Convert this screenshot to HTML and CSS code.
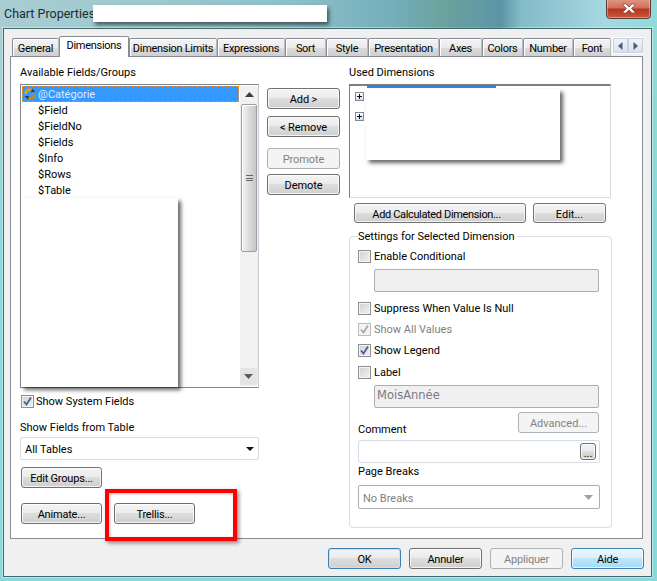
FILE: index.html
```html
<!DOCTYPE html>
<html lang="en">
<head>
<meta charset="utf-8">
<title>Chart Properties</title>
<link rel="stylesheet" href="styles.css">
</head>
<body>
<div class="window">
  <div class="blur-patch"></div>
  <header class="titlebar">
    <span class="title">Chart Properties</span>
    <span class="title-mask"></span>
    <button class="close" aria-label="Close">
      <svg width="16" height="11" viewBox="0 0 16 11"><path d="M2 1h3l3 3 3-3h3v1l-3.500 3.500L14 9v1h-3L8 7l-3 3H2V9l3.500-3.500L2 2z" fill="#fff" stroke="#7d3a30" stroke-width=".7"/></svg>
    </button>
  </header>
  <main class="client">
    <nav class="tabstrip">
      <span class="tab t-general">General</span>
      <span class="tab active t-dimensions">Dimensions</span>
      <span class="tab t-limits">Dimension Limits</span>
      <span class="tab t-expressions">Expressions</span>
      <span class="tab t-sort">Sort</span>
      <span class="tab t-style">Style</span>
      <span class="tab t-presentation">Presentation</span>
      <span class="tab t-axes">Axes</span>
      <span class="tab t-colors">Colors</span>
      <span class="tab t-number">Number</span>
      <span class="tab t-font">Font</span>
      <span class="tab-scroll">
        <span class="tab-arrow"><svg width="5" height="8" viewBox="0 0 5 8"><path d="M4.500 0v8L0 4z" fill="#4a5a78"/></svg></span>
        <span class="tab-arrow"><svg width="5" height="8" viewBox="0 0 5 8"><path d="M.5 0v8L5 4z" fill="#4a5a78"/></svg></span>
      </span>
    </nav>
    <section class="page">
      <div class="col-left">
        <div class="label">Available Fields/Groups</div>
        <div class="listbox">
          <div class="list-rows">
            <div class="row selected">
              <svg class="group-icon" width="14" height="14" viewBox="0 0 14 14"><path d="M2.500 7a4.500 4.500 0 0 1 8-2.800" fill="none" stroke="#e8a010" stroke-width="2.400"/><path d="M11.500 7a4.500 4.500 0 0 1-8 2.800" fill="none" stroke="#c98a08" stroke-width="2.400"/><path d="M9 1.500l3.500 3.500H8z" fill="#3a3a30"/><path d="M5 12.500L1.500 9H6z" fill="#3a3a30"/></svg>
              <span class="row-text">@Catégorie</span>
            </div>
            <div class="row">$Field</div>
            <div class="row">$FieldNo</div>
            <div class="row">$Fields</div>
            <div class="row">$Info</div>
            <div class="row">$Rows</div>
            <div class="row">$Table</div>
          </div>
          <div class="scrollbar">
            <span class="sb-btn"><svg width="9" height="5" viewBox="0 0 9 5"><path d="M4.500 0L9 5H0z" fill="#3c3c3c"/></svg></span>
            <span class="sb-thumb"><span class="grip"></span></span>
            <span class="sb-btn sb-down"><svg width="9" height="5" viewBox="0 0 9 5"><path d="M4.500 5L9 0H0z" fill="#5a5a5a"/></svg></span>
          </div>
          <div class="mask mask-list"></div>
        </div>
        <label class="check check-system">
          <span class="box"><svg width="11" height="11" viewBox="0 0 11 11"><path d="M2 5.500l2.500 3L9 1.500" fill="none" stroke="#4a5f97" stroke-width="1.800"/></svg></span>
          Show System Fields
        </label>
        <div class="label label-table">Show Fields from Table</div>
        <div class="combo combo-tables">
          <span class="combo-text">All Tables</span>
          <svg width="8" height="4" viewBox="0 0 8 4"><path d="M0 0h8L4 4z" fill="#111"/></svg>
        </div>
        <button class="btn btn-side btn-groups">Edit Groups...</button>
        <div class="btn-row">
          <button class="btn btn-side">Animate...</button>
          <button class="btn btn-side">Trellis...</button>
        </div>
      </div>

      <div class="col-mid">
        <button class="btn btn-mid">Add &gt;</button>
        <button class="btn btn-mid">&lt; Remove</button>
        <button class="btn btn-mid disabled gap-promote" disabled>Promote</button>
        <button class="btn btn-mid gap-demote">Demote</button>
      </div>

      <div class="col-right">
        <div class="label">Used Dimensions</div>
        <div class="treebox">
          <div class="tree-row"><span class="plus"></span></div>
          <div class="tree-row"><span class="plus"></span></div>
          <div class="tree-bar"></div>
          <div class="mask mask-tree"></div>
        </div>
        <div class="calc-row">
          <button class="btn btn-calc">Add Calculated Dimension...</button>
          <button class="btn btn-edit">Edit...</button>
        </div>
        <div class="group">
          <div class="legend">Settings for Selected Dimension</div>
          <label class="check c-conditional"><span class="box"></span>Enable Conditional</label>
          <div class="field field-empty"></div>
          <label class="check c-suppress"><span class="box"></span>Suppress When Value Is Null</label>
          <label class="check c-all muted"><span class="box box-off"><svg width="11" height="11" viewBox="0 0 11 11"><path d="M2 5.500l2.500 3L9 1.500" fill="none" stroke="#a8a8a8" stroke-width="1.800"/></svg></span>Show All Values</label>
          <label class="check c-legend"><span class="box"><svg width="11" height="11" viewBox="0 0 11 11"><path d="M2 5.500l2.500 3L9 1.500" fill="none" stroke="#4a5f97" stroke-width="1.800"/></svg></span>Show Legend</label>
          <label class="check c-label"><span class="box"></span>Label</label>
          <div class="field field-mois">MoisAnnée</div>
          <div class="comment-row">
            <span class="comment-label">Comment</span>
            <button class="btn btn-advanced disabled" disabled>Advanced...</button>
          </div>
          <div class="comment-input"><button class="btn btn-dots">...</button></div>
          <div class="label label-breaks">Page Breaks</div>
          <div class="combo combo-breaks">
            <span class="combo-text">No Breaks</span>
            <svg width="9" height="5" viewBox="0 0 9 5"><path d="M0 0h9L4.500 5z" fill="#a0a0a0"/></svg>
          </div>
        </div>
      </div>
      <div class="highlight"></div>
    </section>
    <footer class="footer">
      <button class="btn btn-foot btn-default">OK</button>
      <button class="btn btn-foot">Annuler</button>
      <button class="btn btn-foot disabled" disabled>Appliquer</button>
      <button class="btn btn-foot btn-hover">Aide</button>
    </footer>
  </main>
</div>
</body>
</html>
```

FILE: styles.css
```css
* { box-sizing: border-box; }
html, body { margin: 0; padding: 0; }
body {
  width: 657px;
  height: 581px;
  overflow: hidden;
  font-family: Roboto, "Liberation Sans", Arial, sans-serif;
  font-size: 11px;
  color: #000;
}
button { font: inherit; color: inherit; margin: 0; padding: 0; }

.window {
  position: relative;
  width: 657px;
  height: 581px;
  padding: 0 5px 4px 3px;
  background:
    linear-gradient(180deg, rgba(134,218,218,0) 30px, #86dada 260px),
    linear-gradient(90deg, #a9cdd3 0%, #9cc8cf 25%, #8cc0c8 45%, #74aebb 60%, #7fb8c4 78%, #a6d8e2 92%, #8fdada 100%);
  overflow: hidden;
}
.blur-patch {
  position: absolute;
  left: 390px;
  top: 0;
  width: 130px;
  height: 28px;
  background: linear-gradient(90deg, rgba(90,150,150,0), rgba(95,150,130,.55) 40%, rgba(70,125,150,.6) 85%, rgba(70,125,150,0));
}
.titlebar {
  position: relative;
  height: 28px;
  display: flex;
  align-items: flex-start;
  padding-left: 1px;
}
.title {
  margin-top: 7px;
  font-size: 12.500px;
  line-height: 14px;
  color: #1c2a2c;
  width: 89px;
  white-space: nowrap;
}
.title-mask {
  margin-top: 5px;
  width: 234px;
  height: 17px;
  background: #fff;
  box-shadow: 2px 3px 4px rgba(0,0,0,.55);
}
.close {
  position: absolute;
  left: 603px;
  top: -2px;
  width: 45px;
  height: 21px;
  border: 1px solid #5c3a38;
  border-radius: 0 0 4px 4px;
  background: linear-gradient(#e09a86 0%, #d0705a 45%, #b83520 55%, #c85a3a 100%);
  box-shadow: inset 0 0 0 1px rgba(255,255,255,.35);
  display: flex;
  align-items: center;
  justify-content: center;
}

.client {
  width: 649px;
  height: 549px;
  border: 1px solid #40686c;
  background: #f0f0f0;
  padding: 7px 0 0 6px;
  box-shadow: 0 0 0 1px rgba(255,255,255,.4);
}

.tabstrip {
  position: relative;
  z-index: 1;
  display: flex;
  align-items: flex-end;
  height: 20px;
  padding-left: 2px;
}
.tab {
  height: 18px;
  border: 1px solid #898c95;
  border-bottom: 0;
  border-right-color: #b8bac0;
  border-radius: 2px 2px 0 0;
  background: linear-gradient(#f4f4f4 0%, #ebebeb 50%, #dcdcdc 51%, #cfcfcf 100%);
  box-shadow: inset 1px 1px 0 #fff;
  line-height: 19px;
  letter-spacing: -.3px;
  text-align: center;
  white-space: nowrap;
}
.tab.active {
  height: 21px;
  margin-bottom: -1px;
  background: #fff;
  border-right-color: #898c95;
  line-height: 17px;
  padding-bottom: 3px;
}
.t-general { width: 47px; }
.t-dimensions { width: 70px; }
.t-limits { width: 88px; }
.t-expressions { width: 68px; }
.t-sort { width: 41px; }
.t-style { width: 42px; }
.t-presentation { width: 71px; }
.t-axes { width: 43px; }
.t-colors { width: 41px; }
.t-number { width: 50px; }
.t-font { width: 38px; }
.tab-scroll {
  display: flex;
  align-self: flex-start;
  margin: 1px 0 0 1px;
  padding: 1px 0 1px 1px;
  background: #fff;
  height: 17px;
}
.tab-arrow {
  width: 15px;
  height: 15px;
  border: 1px solid #c4d4e4;
  background: linear-gradient(#f2f4f8, #dbe1ea);
  display: flex;
  align-items: center;
  justify-content: center;
}

.page {
  position: relative;
  width: 633px;
  height: 483px;
  border: 1px solid #898c95;
  background: #fff;
  padding: 8px 0 0 9px;
  display: grid;
  grid-template-columns: 239px 73px 263px;
  column-gap: 8px;
  align-items: start;
}
.label { height: 14px; line-height: 16px; white-space: nowrap; }

.col-right { margin-left: 1px; }

.listbox {
  position: relative;
  margin-top: 5px;
  height: 304px;
  border: 1px solid #82878f;
  border-right-color: #c8ccd0;
  border-bottom-color: #82878f;
  display: flex;
  padding: 1px 0 1px 1px;
}
.list-rows { width: 219px; }
.row {
  height: 16px;
  line-height: 18px;
  padding-left: 16px;
  white-space: nowrap;
}
.row.selected {
  display: flex;
  align-items: flex-start;
  padding-left: 1px;
  gap: 1px;
  background: #3399ff;
  color: #dcecff;
  outline: 1px dashed #e88a20;
  outline-offset: -1px;
}
.group-icon { flex: none; margin-top: 1px; }
.row-text { height: 16px; }
.scrollbar {
  width: 18px;
  margin-left: 1px;
  display: flex;
  flex-direction: column;
  background: #f1f1f1;
}
.sb-btn {
  height: 17px;
  display: flex;
  align-items: center;
  justify-content: center;
}
.sb-thumb {
  height: 148px;
  margin: 1px 1px 0;
  border: 1px solid #9aa0a6;
  border-radius: 2px;
  background: linear-gradient(90deg, #f4f4f4, #dcdcdc 50%, #c6c6c6);
  box-shadow: inset 1px 1px 0 #fff;
  display: flex;
  align-items: center;
  justify-content: center;
}
.grip {
  width: 7px;
  height: 6px;
  border-top: 1px solid #666;
  border-bottom: 1px solid #666;
  background: linear-gradient(transparent 2px, #666 2px, #666 3px, transparent 3px);
}
.sb-down { margin-top: auto; background: #e4e4e4; margin-bottom: 1px; margin-right: 1px; }

.mask { position: absolute; background: #fff; box-shadow: 3px 3px 4px rgba(0,0,0,.6); }
.mask-list { left: 0; top: 113px; width: 157px; height: 189px; }
.mask-tree { left: 16px; top: 3px; width: 194px; height: 71px; }

.check {
  display: flex;
  align-items: flex-start;
  gap: 3px;
  height: 14px;
  line-height: 16px;
  white-space: nowrap;
}
.box {
  flex: none;
  width: 13px;
  height: 13px;
  margin-top: 1px;
  border: 1px solid #8e8f8f;
  background: linear-gradient(135deg, #cfd1d4, #f0f1f2);
  box-shadow: inset 0 0 0 1px #f4f4f4;
  display: flex;
  align-items: center;
  justify-content: center;
}
.box-off { background: #f4f4f4; border-color: #bcbcbc; }
.muted { color: #7f7f7f; }
.check-system { margin: 6px 0 0 1px; gap: 2px; }
.label-table { margin-top: 12px; }
.combo {
  display: flex;
  align-items: center;
  justify-content: space-between;
  margin-top: 3px;
  height: 23px;
  padding: 0 4px 0 4px;
  border: 1px solid #d6dde4;
  border-radius: 2px;
  background: #fff;
  white-space: nowrap;
}
.combo-text { padding-top: 2px; }
.btn {
  display: block;
  height: 21px;
  padding-top: 2px;
  border: 1px solid #707070;
  border-radius: 3px;
  background: linear-gradient(#f4f4f4 0%, #ebebeb 48%, #dddddd 50%, #cfcfcf 100%);
  box-shadow: inset 0 0 0 1px rgba(255,255,255,.75);
  text-align: center;
  white-space: nowrap;
}
.btn.disabled {
  border-color: #adb2b5;
  background: #f4f4f4;
  color: #838383;
  box-shadow: none;
}
.btn-side { width: 81px; letter-spacing: -.2px; }
.btn-groups { margin: 7px 0 0 1px; }
.btn-row { display: flex; gap: 12px; margin: 15px 0 0 1px; }

.col-mid { padding-top: 23px; display: flex; flex-direction: column; }
.btn-mid { width: 73px; letter-spacing: -.1px; margin-bottom: 7px; }
.gap-promote { margin-top: 4px; margin-bottom: 5px; }

.treebox {
  position: relative;
  margin-top: 5px;
  width: 262px;
  height: 114px;
  border: 1px solid #d8dce0;
  border-top: 2px solid #7e7e7e;
  border-left: 1px solid #7e7e7e;
  padding: 6px 0 0 5px;
}
.tree-row { height: 20px; }
.plus {
  display: block;
  width: 9px;
  height: 9px;
  border: 1px solid #7a8a9a;
  background:
    linear-gradient(#111, #111) center / 5px 1px no-repeat,
    linear-gradient(#111, #111) center / 1px 5px no-repeat,
    linear-gradient(#fff, #d8dee6);
}
.tree-bar {
  position: absolute;
  left: 17px;
  top: -1px;
  width: 129px;
  height: 3px;
  background: #3a7fdc;
}
.calc-row { display: flex; gap: 7px; margin: 5px 0 0 5px; }
.btn-calc { width: 172px; height: 20px; padding-right: 7px; letter-spacing: -.35px; }
.btn-edit { width: 73px; height: 20px; }

.group {
  margin-top: 13px;
  width: 263px;
  height: 292px;
  border: 1px solid #d5dfe5;
  border-radius: 4px;
  padding: 0 0 0 8px;
}
.legend {
  width: fit-content;
  margin-top: -8px;
  padding: 0 2px 0 0;
  height: 14px;
  line-height: 16px;
  background: #fff;
}
.c-conditional { margin-top: 6px; }
.field {
  margin: 6px 0 0 16px;
  width: 225px;
  height: 23px;
  border: 1px solid #abadb3;
  border-radius: 2px;
  background: #f0f0f0;
}
.field-mois {
  padding-left: 2px;
  line-height: 19px;
  font-family: "DejaVu Sans", sans-serif;
  font-size: 11.500px;
  color: #7a7a86;
}
.c-suppress { margin-top: 9px; }
.c-all { margin-top: 7px; }
.c-legend { margin-top: 7px; }
.c-label { margin-top: 8px; }
.comment-row {
  display: flex;
  justify-content: space-between;
  margin-top: 4px;
  width: 241px;
  height: 24px;
}
.comment-label { align-self: flex-end; line-height: 16px; height: 14px; }
.btn-advanced { width: 81px; }
.comment-input {
  display: flex;
  justify-content: flex-end;
  align-items: center;
  margin-top: 4px;
  width: 242px;
  height: 23px;
  padding-right: 3px;
  border: 1px solid #d6dde4;
  border-radius: 2px;
}
.btn-dots { width: 16px; height: 17px; padding-top: 3px; }
.label-breaks { margin-top: 1px; }
.combo-breaks {
  margin-top: 7px;
  width: 242px;
  height: 24px;
  border-color: #abadb3;
  color: #7f7f7f;
  padding: 0 6px 0 4px;
}

.highlight {
  position: absolute;
  left: 94px;
  top: 432px;
  width: 132px;
  height: 52px;
  border: 4px solid #f00;
  box-shadow: 2px 2px 4px rgba(0,0,0,.45), inset 1px 1px 3px rgba(0,0,0,.25);
}

.footer {
  display: flex;
  justify-content: flex-end;
  gap: 8px;
  margin-top: 9px;
  width: 634px;
}
.btn-foot { width: 73px; letter-spacing: -.2px; }
.btn-default { border-color: #3c7fb1; box-shadow: inset 0 0 0 1px #bfe6f5; }
.btn-hover {
  border-color: #3c7fb1;
  background: linear-gradient(#eaf6fd 0%, #d9f0fc 48%, #bee6fd 50%, #a7d9f5 100%);
}
```
